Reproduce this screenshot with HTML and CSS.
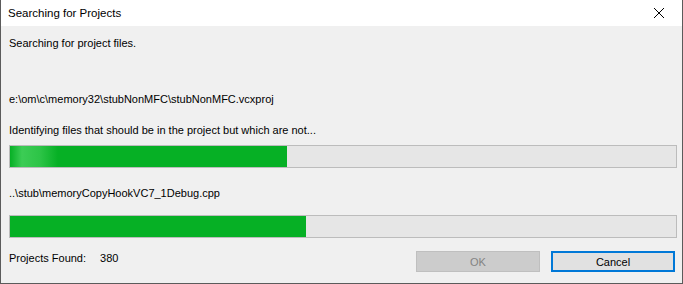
FILE: index.html
```html
<!DOCTYPE html>
<html>
<head>
<meta charset="utf-8">
<link rel="stylesheet" href="styles.css">
</head>
<body>
<div class="window">
  <div class="titlebar">
    <span class="title">Searching for Projects</span>
    <span class="close">
      <svg width="12" height="12" viewBox="0 0 12 12"><path d="M1 1 L11 11 M11 1 L1 11" stroke="#000" stroke-width="1" fill="none"/></svg>
    </span>
  </div>
  <div class="content">
    <div class="line l1">Searching for project files.</div>
    <div class="line l2">e:\om\c\memory32\stubNonMFC\stubNonMFC.vcxproj</div>
    <div class="line l3">Identifying files that should be in the project but which are not...</div>
    <div class="bar b1"><div class="fill fill1" style="width:41.6%"></div></div>
    <div class="line l4">..\stub\memoryCopyHookVC7_1Debug.cpp</div>
    <div class="bar b2"><div class="fill" style="width:44.4%"></div></div>
    <div class="footer">
      <div class="found"><span class="label">Projects Found:</span><span class="count">380</span></div>
      <div class="buttons">
        <button class="btn ok" disabled>OK</button>
        <button class="btn cancel">Cancel</button>
      </div>
    </div>
  </div>
</div>
</body>
</html>
```
FILE: styles.css
```css
html, body {
  margin: 0;
  padding: 0;
  background: #f0f0f0;
}
.window {
  width: 683px;
  height: 284px;
  box-sizing: border-box;
  border: 1px solid #5b5b5b;
  border-top: none;
  background: #f0f0f0;
  font-family: "Liberation Sans", "DejaVu Sans", sans-serif;
  font-size: 11px;
  color: #000;
  display: flex;
  flex-direction: column;
}
.titlebar {
  height: 26px;
  background: #fff;
  display: flex;
  align-items: center;
  justify-content: space-between;
  padding: 0 0 0 7px;
}
.title {
  font-size: 11.5px;
  line-height: 16px;
}
.close {
  width: 46px;
  height: 26px;
  display: flex;
  align-items: center;
  justify-content: center;
}
.content {
  flex: 1;
  display: flex;
  flex-direction: column;
  padding: 9px 5px 0 8px;
}
.line {
  line-height: 16px;
  height: 16px;
  white-space: nowrap;
}
.l2 { margin-top: 40px; }
.l3 { margin-top: 15px; }
.bar {
  height: 23px;
  box-sizing: border-box;
  border: 1px solid #bcbcbc;
  background: #e6e6e6;
  width: 668px;
}
.b1 { margin-top: 7px; }
.l4 { margin-top: 17px; }
.b2 { margin-top: 14px; }
.fill {
  height: 100%;
  background: #06b025;
}
.fill1 {
  background: linear-gradient(to right, #06b025 0px, #3ccc55 12px, #2dc447 30px, #06b025 48px, #06b025 100%);
}
.footer {
  margin-top: 13px;
  display: flex;
  justify-content: space-between;
  align-items: flex-start;
}
.found {
  margin-top: -1px;
  line-height: 16px;
}
.count {
  margin-left: 14px;
}
.buttons {
  display: flex;
  gap: 11px;
  margin-right: 2px;
}
.btn {
  width: 124px;
  height: 21px;
  box-sizing: border-box;
  font-family: inherit;
  font-size: 11px;
  padding: 0;
  margin: 0;
  border-radius: 0;
  line-height: 16px;
}
.ok {
  background: #cccccc;
  border: 1px solid #bfbfbf;
  color: #838383;
}
.cancel {
  background: #e1e1e1;
  border: 2px solid #0078d7;
  color: #000;
}
```
